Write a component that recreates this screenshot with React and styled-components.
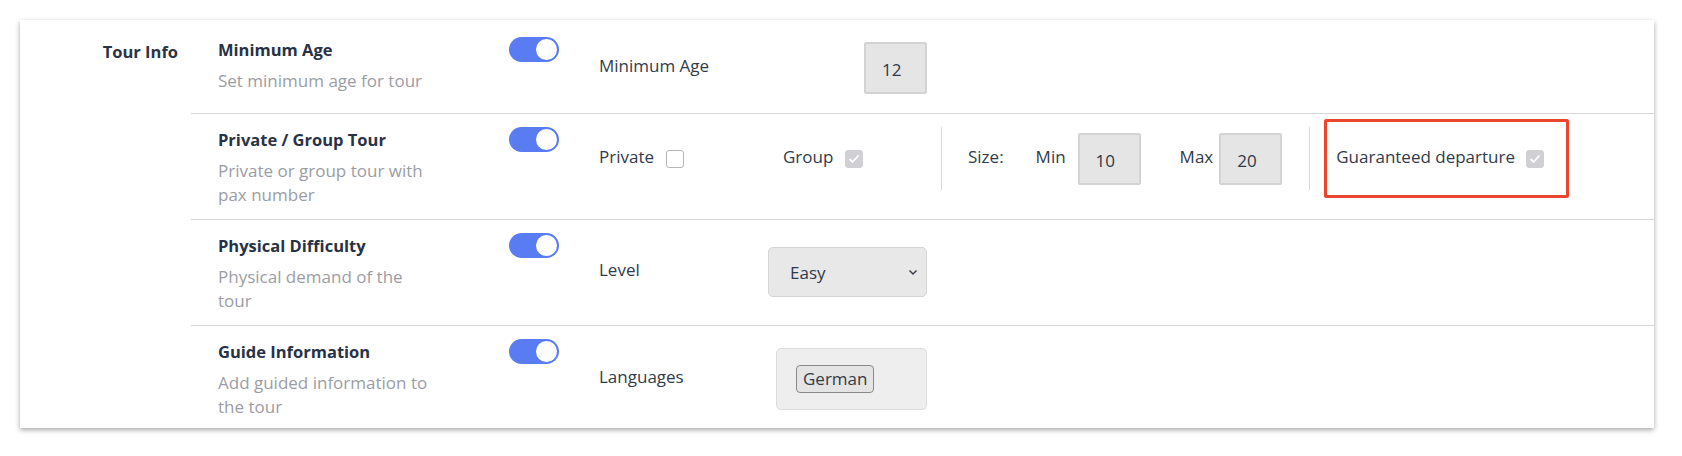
import React from 'react';
import styled, { createGlobalStyle } from 'styled-components';

const GlobalStyle = createGlobalStyle`
  body {
    margin: 0;
    background: #fff;
    font-family: "Open Sans", "Noto Sans", Arial, sans-serif;
    color: #2f3849;
  }
`;

const Page = styled.div`
  padding: 20px 28px 28px 20px;
`;

const Card = styled.div`
  display: flex;
  width: 1634px;
  height: 408px;
  box-sizing: border-box;
  padding-top: 4px;
  background: #fff;
  box-shadow: 0 2px 5px rgba(0, 0, 0, 0.35);
  overflow: hidden;
`;

const SectionLabel = styled.div`
  width: 171px;
  flex-shrink: 0;
  box-sizing: border-box;
  padding: 13px 13px 0 0;
  text-align: right;
  font-weight: 700;
  font-size: 16.5px;
  line-height: 30px;
  color: #2b3447;
`;

const Rows = styled.div`
  flex: 1;
  display: flex;
  flex-direction: column;
`;

const Row = styled.div`
  display: flex;
  align-items: flex-start;
  padding-left: 27px;

  & + & {
    border-top: 1px solid #d6d6d6;
  }
`;

const Info = styled.div`
  width: 291px;
  flex-shrink: 0;
  box-sizing: border-box;
  padding: 13px 0 12px;
`;

const Title = styled.div`
  font-size: 16.5px;
  font-weight: 700;
  line-height: 26px;
  color: #283246;
`;

const Desc = styled.div`
  margin-top: 6px;
  font-size: 17px;
  line-height: 24px;
  color: #9b9da4;
  white-space: pre-line;
`;

const Toggle = styled.div`
  position: relative;
  flex-shrink: 0;
  margin-top: 13px;
  width: 50px;
  height: 25px;
  border-radius: 13px;
  background: ${(p) => (p.$on ? '#5a7cf2' : '#cfd3db')};

  &::after {
    content: '';
    position: absolute;
    top: 2px;
    ${(p) => (p.$on ? 'right: 2px;' : 'left: 2px;')}
    width: 21px;
    height: 21px;
    border-radius: 50%;
    background: #fff;
  }
`;

const Controls = styled.div`
  margin-left: 40px;
  padding: ${(p) => p.$top}px 0 19px;
  display: flex;
  align-items: center;
  font-size: 17px;
  color: #323b4d;
`;

const Label = styled.span`
  line-height: 24px;
  padding-bottom: 4px;
`;

const Field = styled.div`
  width: 328px;
  display: flex;
  align-items: center;
  justify-content: space-between;
`;

const NumberBox = styled.input`
  width: 63px;
  height: 52px;
  box-sizing: border-box;
  padding: 3px 0 0 16px;
  border: 2px solid #d3d3d3;
  border-radius: 2px;
  background: #e5e5e5;
  font-family: inherit;
  font-size: 17px;
  color: #2f3849;
  outline: none;
`;

const SelectBox = styled.div`
  width: 159px;
  height: 50px;
  box-sizing: border-box;
  padding: 0 8px 0 21px;
  display: flex;
  align-items: center;
  justify-content: space-between;
  border: 1.5px solid #d5d5d5;
  border-radius: 5px;
  background: #e8e8e8;
  font-size: 17px;
  color: #2f3849;
`;

const TagBox = styled.div`
  width: 151px;
  height: 62px;
  box-sizing: border-box;
  padding: 0 0 0 19px;
  display: flex;
  align-items: center;
  border: 1.5px solid #dcdcdc;
  border-radius: 5px;
  background: #eeeeee;
`;

const Tag = styled.span`
  height: 28px;
  box-sizing: border-box;
  padding: 0 6px 1px;
  display: inline-flex;
  align-items: center;
  border: 1.5px solid #8a8a8a;
  border-radius: 4px;
  background: #e4e4e4;
  font-size: 17px;
  color: #333a46;
`;

const CheckGroup = styled.label`
  width: ${(p) => p.$width}px;
  display: flex;
  align-items: center;
  gap: 12px;
`;

const Box = styled.span`
  width: 18px;
  height: 18px;
  box-sizing: border-box;
  display: inline-flex;
  align-items: center;
  justify-content: center;
  border-radius: 3px;
  border: 1.5px solid ${(p) => (p.$checked ? '#cfcfd4' : '#b5b5b8')};
  background: ${(p) => (p.$checked ? '#cfcfd4' : '#fff')};
`;

const Divider = styled.div`
  width: 1px;
  height: 63px;
  background: #d9d9d9;
`;

const SizeLabel = styled(Label)`
  margin: 0 32px 0 26px;
`;

const MinMax = styled.div`
  display: flex;
  align-items: center;
  gap: ${(p) => p.$gap}px;
  margin-left: ${(p) => p.$left}px;
`;

const Highlight = styled.div`
  margin-left: 14px;
  width: 245px;
  height: 79px;
  box-sizing: border-box;
  padding-left: 9px;
  display: flex;
  align-items: center;
  gap: 11px;
  border: 3px solid #e9452f;
  border-radius: 2px;
`;

const Checkbox = ({ checked }) => (
  <Box $checked={checked}>
    {checked && (
      <svg width="12" height="10" viewBox="0 0 12 10">
        <polyline points="1.5,5 4.5,8 10.5,1.5" fill="none" stroke="#fff" strokeWidth="1.8" />
      </svg>
    )}
  </Box>
);

const Chevron = () => (
  <svg width="10" height="7" viewBox="0 0 10 7">
    <path d="M1.5 1.5 L5 5 L8.5 1.5" fill="none" stroke="#3a3f4a" strokeWidth="1.5" />
  </svg>
);

const TourInfo = () => (
  <Card>
    <SectionLabel>Tour Info</SectionLabel>
    <Rows>
      <Row>
        <Info>
          <Title>Minimum Age</Title>
          <Desc>Set minimum age for tour</Desc>
        </Info>
        <Toggle $on />
        <Controls $top={18}>
          <Field>
            <Label>Minimum Age</Label>
            <NumberBox readOnly value="12" />
          </Field>
        </Controls>
      </Row>

      <Row>
        <Info>
          <Title>Private / Group Tour</Title>
          <Desc>{'Private or group tour with\npax number'}</Desc>
        </Info>
        <Toggle $on />
        <Controls $top={5}>
          <CheckGroup $width={184}>
            <Label>Private</Label>
            <Checkbox />
          </CheckGroup>
          <CheckGroup $width={158}>
            <Label>Group</Label>
            <Checkbox checked />
          </CheckGroup>
          <Divider />
          <SizeLabel>Size:</SizeLabel>
          <MinMax $gap={12} $left={0}>
            <Label>Min</Label>
            <NumberBox readOnly value="10" />
          </MinMax>
          <MinMax $gap={6} $left={39}>
            <Label>Max</Label>
            <NumberBox readOnly value="20" />
          </MinMax>
          <MinMax $gap={0} $left={27}>
            <Divider />
          </MinMax>
          <Highlight>
            <Label>Guaranteed departure</Label>
            <Checkbox checked />
          </Highlight>
        </Controls>
      </Row>

      <Row>
        <Info>
          <Title>Physical Difficulty</Title>
          <Desc>{'Physical demand of the\ntour'}</Desc>
        </Info>
        <Toggle $on />
        <Controls $top={27}>
          <Field>
            <Label>Level</Label>
            <SelectBox>
              <span>Easy</span>
              <Chevron />
            </SelectBox>
          </Field>
        </Controls>
      </Row>

      <Row>
        <Info>
          <Title>Guide Information</Title>
          <Desc>{'Add guided information to\nthe tour'}</Desc>
        </Info>
        <Toggle $on />
        <Controls $top={22}>
          <Field>
            <Label>Languages</Label>
            <TagBox>
              <Tag>German</Tag>
            </TagBox>
          </Field>
        </Controls>
      </Row>
    </Rows>
  </Card>
);

const App = () => (
  <>
    <GlobalStyle />
    <Page>
      <TourInfo />
    </Page>
  </>
);

export default App;
